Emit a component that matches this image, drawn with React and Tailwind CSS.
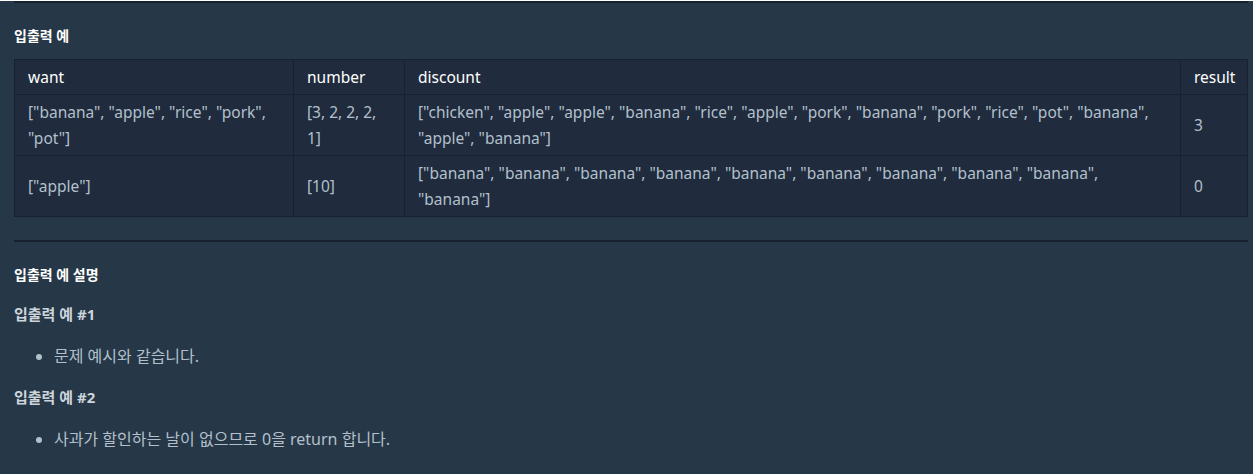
const rows = [
  {
    want: '["banana", "apple", "rice", "pork", "pot"]',
    number: "[3, 2, 2, 2, 1]",
    discount:
      '["chicken", "apple", "apple", "banana", "rice", "apple", "pork", "banana", "pork", "rice", "pot", "banana", "apple", "banana"]',
    result: "3",
  },
  {
    want: '["apple"]',
    number: "[10]",
    discount:
      '["banana", "banana", "banana", "banana", "banana", "banana", "banana", "banana", "banana", "banana"]',
    result: "0",
  },
];

export default function App() {
  return (
    <div
      className="min-h-screen bg-[#263747] px-[14px] pr-[5px] text-[#b2c0cc]"
      style={{ fontFamily: '"Noto Sans", "Noto Sans CJK KR", sans-serif' }}
    >
      <div className="h-[2px] bg-[#172130] mt-px" />

      <h5 className="mt-[23px] text-[14px] font-bold text-white leading-[20px]">입출력 예</h5>

      {/* Example table */}
      <table className="mt-[13px] w-full table-fixed border-collapse bg-[#202b3d] text-[15.5px] leading-[26px]">
        <colgroup>
          <col className="w-[279px]" />
          <col className="w-[111px]" />
          <col />
          <col className="w-[67px]" />
        </colgroup>
        <thead>
          <tr className="text-white">
            <th className="border border-[#172130] px-[13px] py-[4px] text-left font-normal">want</th>
            <th className="border border-[#172130] px-[13px] py-[4px] text-left font-normal">number</th>
            <th className="border border-[#172130] px-[13px] py-[4px] text-left font-normal">discount</th>
            <th className="border border-[#172130] px-[13px] py-[4px] text-left font-normal">result</th>
          </tr>
        </thead>
        <tbody>
          {rows.map((r, i) => (
            <tr key={i}>
              <td className="border border-[#172130] px-[13px] py-[4px] text-[#b2c0cc]">{r.want}</td>
              <td className="border border-[#172130] px-[13px] py-[4px] text-[#b2c0cc]">{r.number}</td>
              <td className="border border-[#172130] px-[13px] py-[4px] text-[#b2c0cc]">{r.discount}</td>
              <td className="border border-[#172130] px-[13px] py-[4px] text-[#b2c0cc]">{r.result}</td>
            </tr>
          ))}
        </tbody>
      </table>

      <div className="mt-[23px] h-[2px] bg-[#172130]" />

      <h5 className="mt-[23px] text-[14px] font-bold text-white leading-[20px]">입출력 예 설명</h5>

      <h6 className="mt-[18px] text-[15px] font-bold text-[#cdd5dc] leading-[22px]">입출력 예 #1</h6>
      <ul className="mt-[19px] list-disc pl-[40px] text-[16px] leading-[24px]">
        <li>문제 예시와 같습니다.</li>
      </ul>

      <h6 className="mt-[18px] text-[15px] font-bold text-[#cdd5dc] leading-[22px]">입출력 예 #2</h6>
      <ul className="mt-[19px] list-disc pl-[40px] text-[16px] leading-[24px]">
        <li>사과가 할인하는 날이 없으므로 0을 return 합니다.</li>
      </ul>
    </div>
  );
}
